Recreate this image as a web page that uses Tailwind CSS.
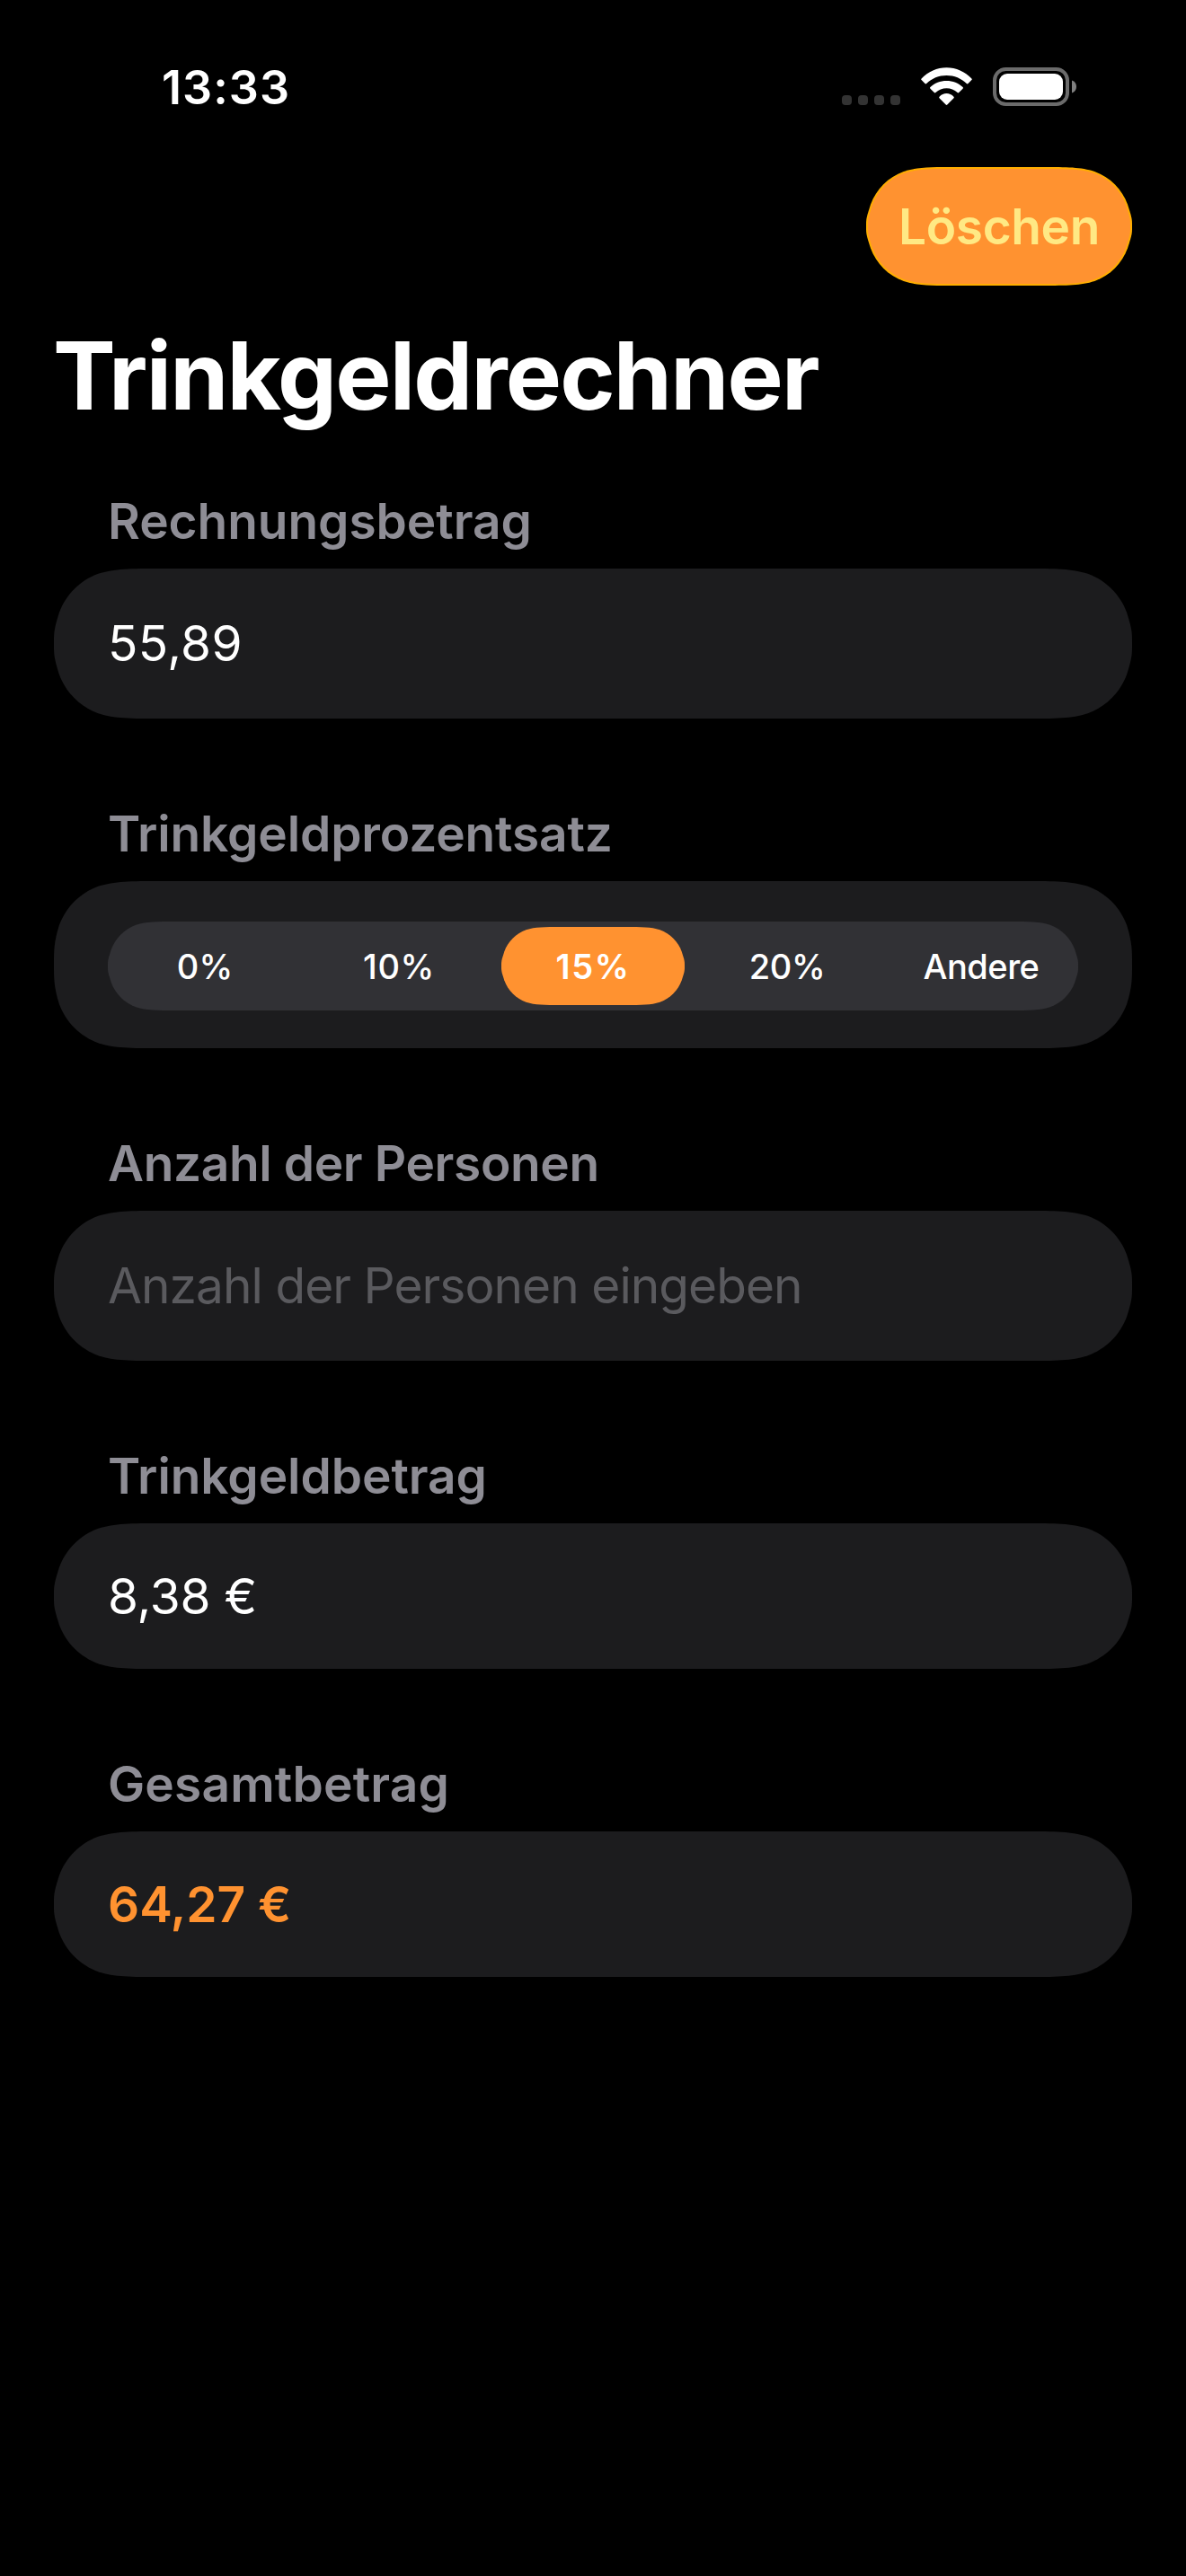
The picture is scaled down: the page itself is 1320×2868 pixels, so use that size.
<!DOCTYPE html>
<html lang="de">
<head>
<meta charset="utf-8">
<title>Trinkgeldrechner</title>
<script src="https://cdn.jsdelivr.net/npm/@tailwindcss/browser@4"></script>
</head>
<body class="bg-black text-white font-['Inter',sans-serif] w-[1320px] h-[2868px] overflow-hidden leading-none antialiased">
<div class="flex flex-col h-full">
  <!-- Status bar -->
  <header class="h-[186px] flex items-start justify-between pl-[180px] pr-[122px] pt-[68px]">
    <div class="h-[60px] leading-[60px] text-[52px] font-semibold tracking-[1.07px]">13:33</div>
    <div class="flex items-start pt-[7px]">
      <div class="flex gap-[7px] pt-[31px] mr-[23px]">
        <span class="size-[11px] rounded-[4px] bg-[#333333]"></span>
        <span class="size-[11px] rounded-[4px] bg-[#333333]"></span>
        <span class="size-[11px] rounded-[4px] bg-[#333333]"></span>
        <span class="size-[11px] rounded-[4px] bg-[#333333]"></span>
      </div>
      <svg class="w-[57px] h-[43px] mr-[23px]" viewBox="0 0 57 43" fill="#fff">
        <path d="M.6 12.4C8 4.6 18 .2 28.5 .2S49 4.6 56.4 12.4q.8 .8 0 1.6L52.5 18q-.8 .8-1.7 0C45 12.3 37 9 28.5 9S12 12.3 6.2 18q-.9 .8-1.7 0L.6 14q-.8-.8 0-1.6Z"/>
        <path d="M10.4 22C15.2 17.6 21.5 15 28.5 15S41.8 17.6 46.6 22q.8 .8 0 1.7L42.2 28.1q-.8 .7-1.6 0C37.3 24.9 33 23.2 28.5 23.2S19.7 24.9 16.4 28.1q-.8 .7-1.6 0L10.4 23.7q-.8-.9 0-1.7Z"/>
        <path d="M20.5 32.8C22.7 30.4 25.5 29.1 28.5 29.1S34.3 30.4 36.5 32.8q.7 .8 0 1.5L29.3 41.6q-.8 .7-1.6 0L20.5 34.3q-.7-.7 0-1.5Z"/>
      </svg>
      <svg class="w-[93px] h-[43px]" viewBox="0 0 93 43">
        <rect x="2" y="2" width="81" height="39" rx="12.5" fill="none" stroke="#6b6b6b" stroke-width="4"/>
        <rect x="7" y="7" width="71" height="29" rx="9" fill="#fff"/>
        <path d="M88 14.5C91 15.3 93 18 93 21.5S91 27.7 88 28.5Z" fill="#808080"/>
      </svg>
    </div>
  </header>

  <!-- Toolbar -->
  <div class="px-[60px] flex justify-end">
    <button data-radius="66" class="w-[296px] h-[132px] rounded-[66px] bg-[#ffae00] p-[2px]">
      <span data-radius="64" class="flex w-[292px] h-[128px] items-center justify-center rounded-[64px] bg-[#ff9230] text-[#ffe984] text-[55px] font-semibold tracking-[-0.39px]">Löschen</span>
    </button>
  </div>

  <h1 class="h-[120px] leading-[120px] mt-[40px] px-[59px] text-[104.6px] font-bold tracking-[-1.81px]">Trinkgeldrechner</h1>

  <main class="px-[60px] flex flex-col gap-[98px] mt-[72px]">
    <section>
      <h2 class="h-[60px] leading-[60px] mb-[23px] px-[60px] text-[55px] font-semibold text-[#8e8d95] tracking-[-0.05px]">Rechnungsbetrag</h2>
      <div data-radius="78" class="h-[167px] rounded-[78px] bg-[#1c1c1e] flex items-center px-[60px] text-[55px] tracking-[0.37px]">55,89</div>
    </section>
    <section>
      <h2 class="h-[60px] leading-[60px] mb-[23px] px-[60px] text-[55px] font-semibold text-[#8e8d95] tracking-[-0.13px]">Trinkgeldprozentsatz</h2>
      <div data-radius="78" class="h-[186px] rounded-[78px] bg-[#1c1c1e] px-[60px] pt-[45px]">
        <div data-radius="49.5" class="h-[99px] rounded-[50px] bg-[#313135] grid grid-cols-5 items-center text-[38px] font-medium text-center">
          <span>0%</span>
          <span class="tracking-[0.7px]">10%</span>
          <span data-radius="43.5" class="flex items-center justify-center justify-self-center w-[204px] h-[87px] rounded-[44px] bg-[#ff9230] font-semibold tracking-[1.67px]">15%</span>
          <span class="tracking-[-0.37px]">20%</span>
          <span class="tracking-[-0.52px]">Andere</span>
        </div>
      </div>
    </section>
    <section>
      <h2 class="h-[60px] leading-[60px] mb-[23px] px-[60px] text-[55px] font-semibold text-[#8e8d95] tracking-[-0.37px]">Anzahl der Personen</h2>
      <div data-radius="78" class="h-[167px] rounded-[78px] bg-[#1c1c1e] flex items-center px-[60px] text-[55px] text-[#5a5a5e] tracking-[-0.94px]">Anzahl der Personen eingeben</div>
    </section>
    <section>
      <h2 class="h-[60px] leading-[60px] mb-[23px] px-[60px] text-[55px] font-semibold text-[#8e8d95] tracking-[-0.07px]">Trinkgeldbetrag</h2>
      <div data-radius="78" class="h-[162px] rounded-[78px] bg-[#1c1c1e] flex items-center px-[60px] text-[55px] tracking-[-0.23px]">8,38 €</div>
    </section>
    <section>
      <h2 class="h-[60px] leading-[60px] mb-[23px] px-[60px] text-[55px] font-semibold text-[#8e8d95] tracking-[0.16px]">Gesamtbetrag</h2>
      <div data-radius="78" class="h-[162px] rounded-[78px] bg-[#1c1c1e] flex items-center px-[60px] text-[55px] font-semibold text-[#ff9230] tracking-[-0.05px]">64,27 €</div>
    </section>
  </main>
</div>
<script>
// Continuous corners: long horizontal ease-in, vertical ease limited to half the height.
function smooth(el) {
  var r = +el.dataset.radius, w = el.offsetWidth, h = el.offsetHeight;
  if (h < 2 * r) return;
  var v = Math.min(1.528665 * r, h / 2);
  var k = [0.868407 * r, 1.088493 * r].map(function (n) { return Math.min(n, v - (v - 0.631494 * r) * 0.35); });
  // Corner control points from the top edge down to the side edge, as [x, y] insets.
  var pts = [[1.528665 * r, 0], [1.088493 * r, 0], [0.868407 * r, 0], [0.631494 * r, 0.074911 * r],
    [0.372824 * r, 0.16906 * r], [0.16906 * r, 0.372824 * r], [0.074911 * r, 0.631494 * r],
    [0, k[0]], [0, k[1]], [0, v]];
  function corner(fx, fy, rev) {
    var p = pts.map(function (q) { return (fx ? w - q[0] : q[0]).toFixed(2) + ' ' + (fy ? h - q[1] : q[1]).toFixed(2); });
    if (rev) p.reverse();
    return p[0] + 'C' + p.slice(1).join(' ');
  }
  var d = 'M' + corner(1, 0, 0) + 'L' + corner(1, 1, 1) + 'L' + corner(0, 1, 0) + 'L' + corner(0, 0, 1) + 'Z';
  el.style.borderRadius = '0';
  el.style.clipPath = 'path("' + d + '")';
}
var observer = new ResizeObserver(function (entries) {
  entries.forEach(function (e) { smooth(e.target); });
});
document.querySelectorAll('[data-radius]').forEach(function (el) { observer.observe(el); });
</script>
</body>
</html>
